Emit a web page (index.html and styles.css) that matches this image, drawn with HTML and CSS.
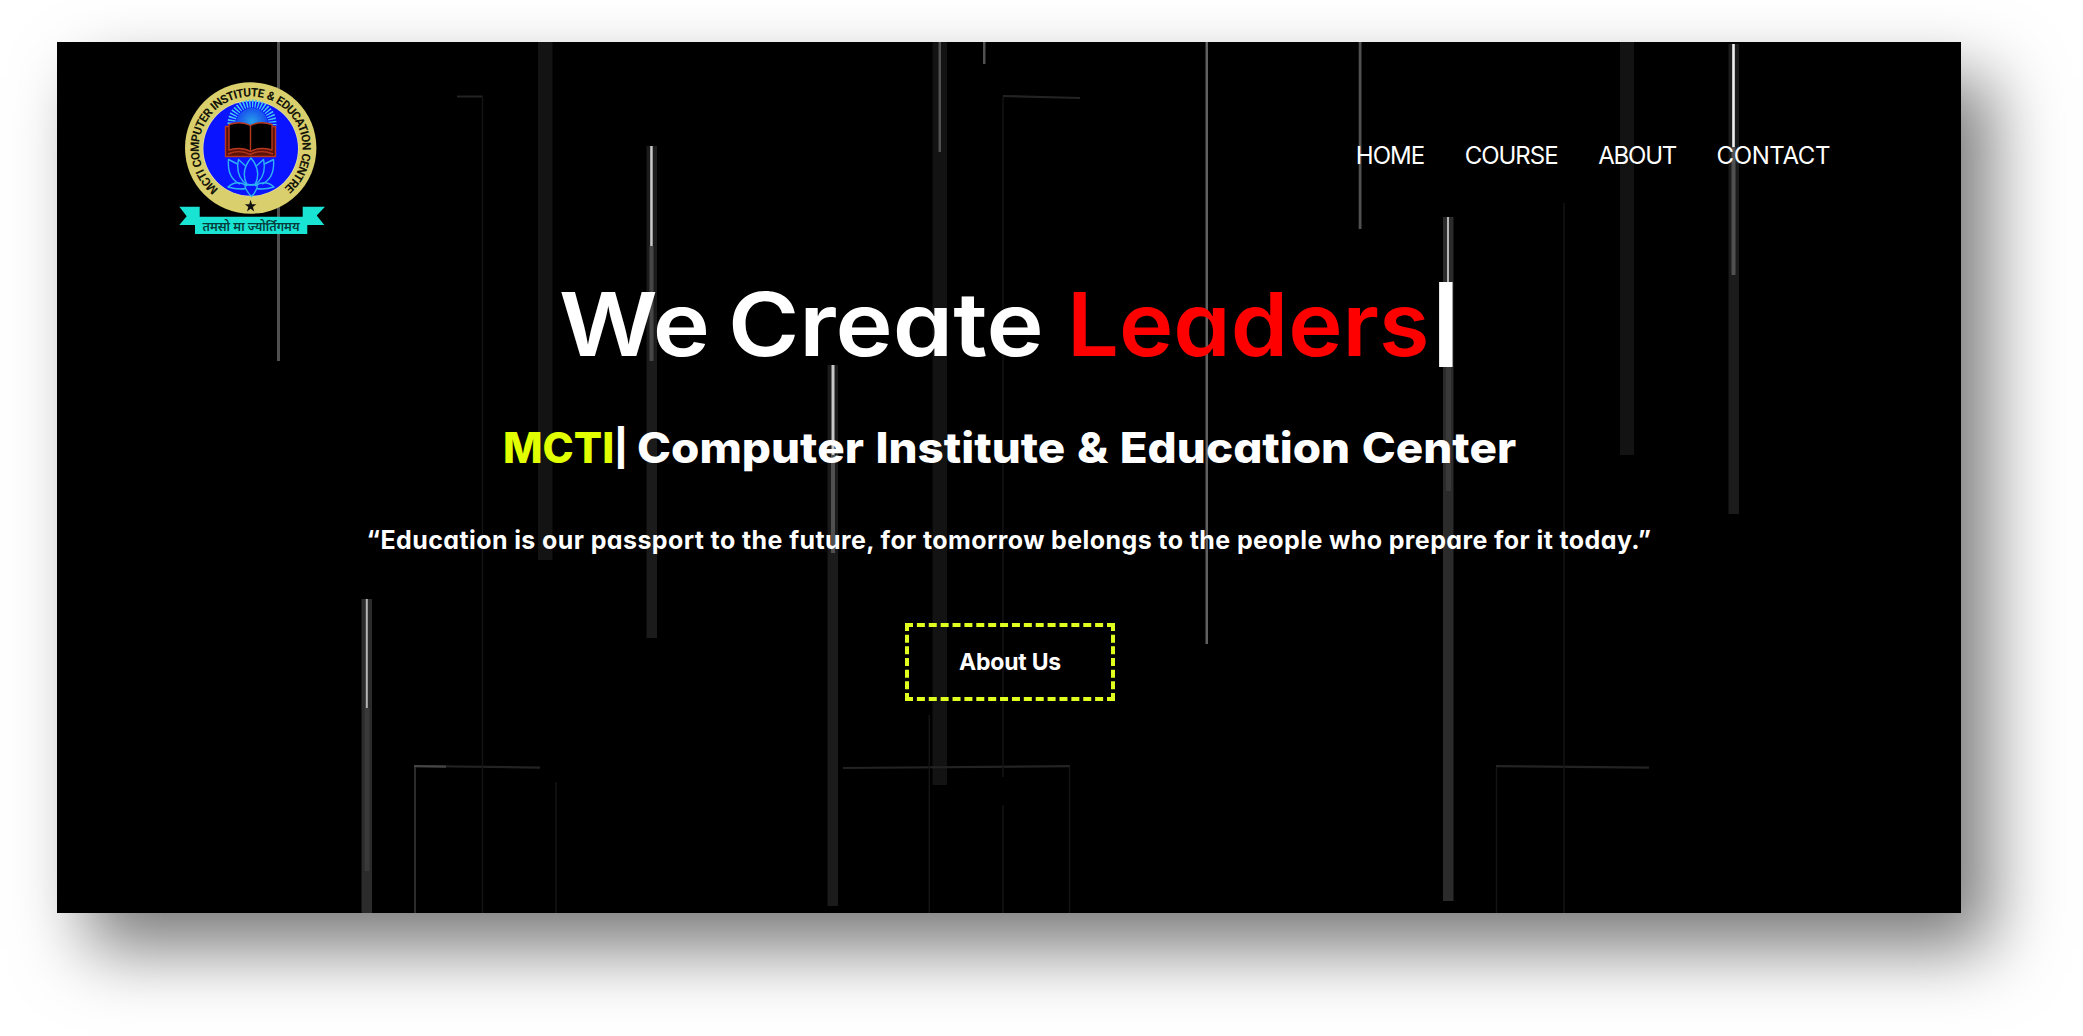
FILE: index.html
```
<!DOCTYPE html>
<html lang="en">
<head>
<meta charset="utf-8">
<title>MCTI Computer Institute &amp; Education Center</title>
<link rel="stylesheet" href="styles.css">
</head>
<body>
<main class="page">
  <svg class="backdrop" viewBox="57 42 1904 871" preserveAspectRatio="none" aria-hidden="true">
    <g fill="#131313">
      <rect x="538" y="42" width="14.5" height="518"/>
      <rect x="932.5" y="42" width="14.5" height="743"/>
      <rect x="1620" y="42" width="14" height="413"/>
    </g>
    <g fill="#1b1b1b">
      <rect x="646.5" y="146" width="10.5" height="492"/>
      <rect x="827.5" y="365" width="10.5" height="541"/>
      <rect x="1728.5" y="44" width="10.5" height="470"/>
    </g>
    <rect x="1443" y="217" width="10.5" height="684" fill="#2b2b2b"/>
    <rect x="361.5" y="599" width="10.5" height="314" fill="#2b2b2b"/>
    <g fill="#505050">
      <rect x="277" y="42" width="3" height="319"/>
      <rect x="938.5" y="42" width="2.5" height="110"/>
      <rect x="983" y="42" width="2.5" height="22"/>
      <rect x="1205.5" y="42" width="2.5" height="602" fill="#606060"/>
      <rect x="1358.7" y="42" width="2.8" height="187"/>
      <rect x="649.5" y="246" width="4" height="115" fill="#464646"/>
      <rect x="1731.5" y="147" width="4" height="128"/>
      <rect x="831" y="455" width="4" height="98" fill="#505050"/>
      <rect x="1446" y="367" width="5" height="124" fill="#393939"/>
      <rect x="364.5" y="708" width="5" height="163" fill="#393939"/>
    </g>
    <g fill="#c8c8c8">
      <rect x="650.2" y="146" width="2.5" height="100"/>
      <rect x="831.5" y="365" width="3" height="90"/>
      <rect x="1732.2" y="44" width="2.6" height="103" fill="#f0f0f0"/>
      <rect x="1447" y="217" width="2" height="70" fill="#b5b5b5"/>
      <rect x="365.8" y="599" width="2" height="109" fill="#b5b5b5"/>
    </g>
    <g fill="none" stroke="#232323" stroke-width="2.2">
      <path d="M457 96.5H482.5M1003 96L1080 98M414 766L540 767.6M843 768L1070 766.2M1496 766.2L1649 767.6"/>
      <path d="M414 766.2L446 766.6" stroke="#454545"/>
    </g>
    <g fill="none" stroke="#141414" stroke-width="1.4">
      <path d="M482.5 97V913M1003 97V777M1003 805V913M1564 203V913M556 782V913M929.3 715V913M1069.5 767V913M1496.5 767V913"/>
      <path d="M415 767V913" stroke="#2b2b2b" stroke-width="2"/>
    </g>
  </svg>

  <header class="header">
    <svg class="logo" viewBox="179 82 146 152" role="img" aria-label="MCTI logo">
      <defs>
        <path id="ring" d="M218.7 189A51.800 51.800 0 1 1 282.700 189"/>
        <radialGradient id="sun" cx="252" cy="122" r="19" gradientUnits="userSpaceOnUse">
          <stop offset="0" stop-color="#28a0e8"/><stop offset="1" stop-color="#1238f0"/>
        </radialGradient>
      </defs>
      <circle cx="250.7" cy="148" r="65.7" fill="#d9cf6c"/>
      <circle cx="250.7" cy="148.5" r="48" fill="#e5e0b0"/>
      <circle cx="250.7" cy="148.5" r="47.3" fill="#0a14ff"/>
      <text class="ring-text"><textPath href="#ring" textLength="254" lengthAdjust="spacing">MCTI COMPUTER INSTITUTE &amp; EDUCATION CENTRE</textPath></text>
      <circle cx="252" cy="124" r="16" fill="url(#sun)"/>
      <circle cx="252" cy="124" r="20.5" fill="none" stroke="#43c8f4" stroke-width="8" stroke-dasharray="1.45 1.477" pathLength="128.8" />
      <rect x="226" y="125" width="50" height="25" fill="#0a14ff"/>
      <g stroke="#b8371e" stroke-width="1.4" stroke-linejoin="round">
        <path fill="#5c1208" d="M225.5 126.5H275.5V156.5H225.5Z"/>
        <path fill="#000" d="M229 124.5Q241 120.5 250.5 125.5Q260 120.5 272 124.5V150Q259 146.500 250.500 151.500Q242 146.500 229 150Z"/>
        <path fill="none" d="M250.500 125.500V151.500M228 154Q240 149 250 154.500Q261 149 273 154"/>
      </g>
      <g fill="none" stroke="#2fb2f4" stroke-width="1.4" stroke-linejoin="round">
        <path d="M251 158Q240 171 247 185H255Q262 171 251 158Z"/>
        <path d="M245.500 166L238.500 159.500Q235 176 247 185M256.500 166L263.500 159.500Q267 176 255 185"/>
        <path d="M237.500 164L228.500 159.500Q227 178 240 184M264.500 164L273.500 159.500Q275 178 262 184"/>
        <path d="M247 186Q237 179 228 187Q238 190 246 188.500M255 186Q265 179 274 187Q264 190 256 188.500"/>
        <path d="M251 185Q242 182 246.500 190Q248 193 251.500 196.500Q255 193 256 190Q260 182 251 185Z"/>
      </g>
      <path fill="#111" d="M250.600 199.800L252 204.200H256.400L252.900 207L254.200 211.400L250.600 208.700L247 211.400L248.300 207L244.800 204.200H249.200Z"/>
      <path fill="#19e3d3" d="M179.300 206.700H199.700V216.700H302.700V206.700H325L316.700 215.500L324.300 225H307.300V234H195V225H179.300L186.700 216.200Z"/>
      <text class="motto" x="202.500" y="230.500" textLength="97" lengthAdjust="spacingAndGlyphs">तमसो मा ज्योर्तिगमय</text>
    </svg>
    <nav class="nav">
      <a>HOME</a><a>COURSE</a><a class="nav-about">ABOUT</a><a class="nav-contact">CONTACT</a>
    </nav>
  </header>

  <section class="hero">
    <h1 class="title">
      <span class="title-lead">We Create</span>
      <span class="title-word">Leaders</span>
      <span class="title-cursor">|</span>
    </h1>
    <h2 class="subtitle">
      <span class="brand">MCTI</span>
      <span class="brand-cursor">|</span>
      <span class="subtitle-text">Computer Institute &amp; Education Center</span>
    </h2>
    <p class="quote">“Education is our passport to the future, for tomorrow belongs to the people who prepare for it today.”</p>
    <a class="button">About Us</a>
  </section>
</main>
</body>
</html>
```
FILE: styles.css
```
* { box-sizing: border-box; }

body {
  margin: 0;
  height: 1036px;
  padding: 42px 0 0 57px;
  overflow: hidden;
  background: #fff;
  color: #fff;
  font-family: Inter, "Liberation Sans", sans-serif;
  font-feature-settings: "cv11";
}

.page {
  position: relative;
  width: 1904px;
  height: 871px;
  background: #000;
  box-shadow: 30px 36px 66px rgba(0, 0, 0, .52);
}

.backdrop {
  position: absolute;
  inset: 0;
  width: 100%;
  height: 100%;
}

.header {
  position: relative;
  display: flex;
  align-items: center;
  justify-content: space-between;
  padding: 40px 131px 0 122px;
}

.logo { width: 146px; height: 152px; }

.ring-text {
  font: 700 11.8px Roboto, "Liberation Sans", sans-serif;
  word-spacing: 1px;
  fill: #151508;
}

.motto {
  font: 600 13px "Noto Sans", sans-serif;
  fill: #063b3b;
}

.nav {
  display: flex;
  gap: 40.5px;
  padding-bottom: 4px;
  font-size: 24px;
  line-height: 30px;
  letter-spacing: -1px;
}

.nav-about { letter-spacing: -1.2px; }

.nav-contact { letter-spacing: -.4px; }

.hero {
  position: relative;
  display: flex;
  flex-direction: column;
  align-items: center;
  padding-top: 40px;
}

.title, .subtitle, .quote { margin: 0; white-space: nowrap; }

.title, .subtitle { display: flex; align-items: center; }

.title span, .subtitle span { display: block; transform-origin: 0 50%; }

.title {
  padding-right: 4px;
  font-size: 88px;
  font-weight: 600;
  line-height: 100px;
}

.title-lead { width: 507px; word-spacing: -6px; transform: translateX(-1px) scaleX(1.1); }

.title-word { width: 362px; color: #f00; transform: scaleX(1.045); }

.title-cursor { width: 25px; font-size: 71px; font-weight: 800; transform: translateX(1px) scaleX(1.15); }

.subtitle {
  margin-top: 49px;
  font-size: 42px;
  font-weight: 800;
  line-height: 50px;
}

.brand { width: 112px; color: #e1ff00; transform: translateX(1px); }

.brand-cursor { width: 23px; font-size: 36px; font-weight: 800; }

.subtitle-text { width: 879px; word-spacing: 1.4px; transform: scaleX(1.09); }

.quote {
  margin-top: 47px;
  font-size: 25px;
  font-weight: 700;
  line-height: 40px;
  letter-spacing: .4px;
}

.button {
  width: 210px;
  height: 78px;
  margin: 63px 0 0 2px;
  border: 4px dashed #e1ff1f;
  font-size: 23px;
  font-weight: 700;
  line-height: 70px;
  letter-spacing: -.2px;
  text-align: center;
}
```
